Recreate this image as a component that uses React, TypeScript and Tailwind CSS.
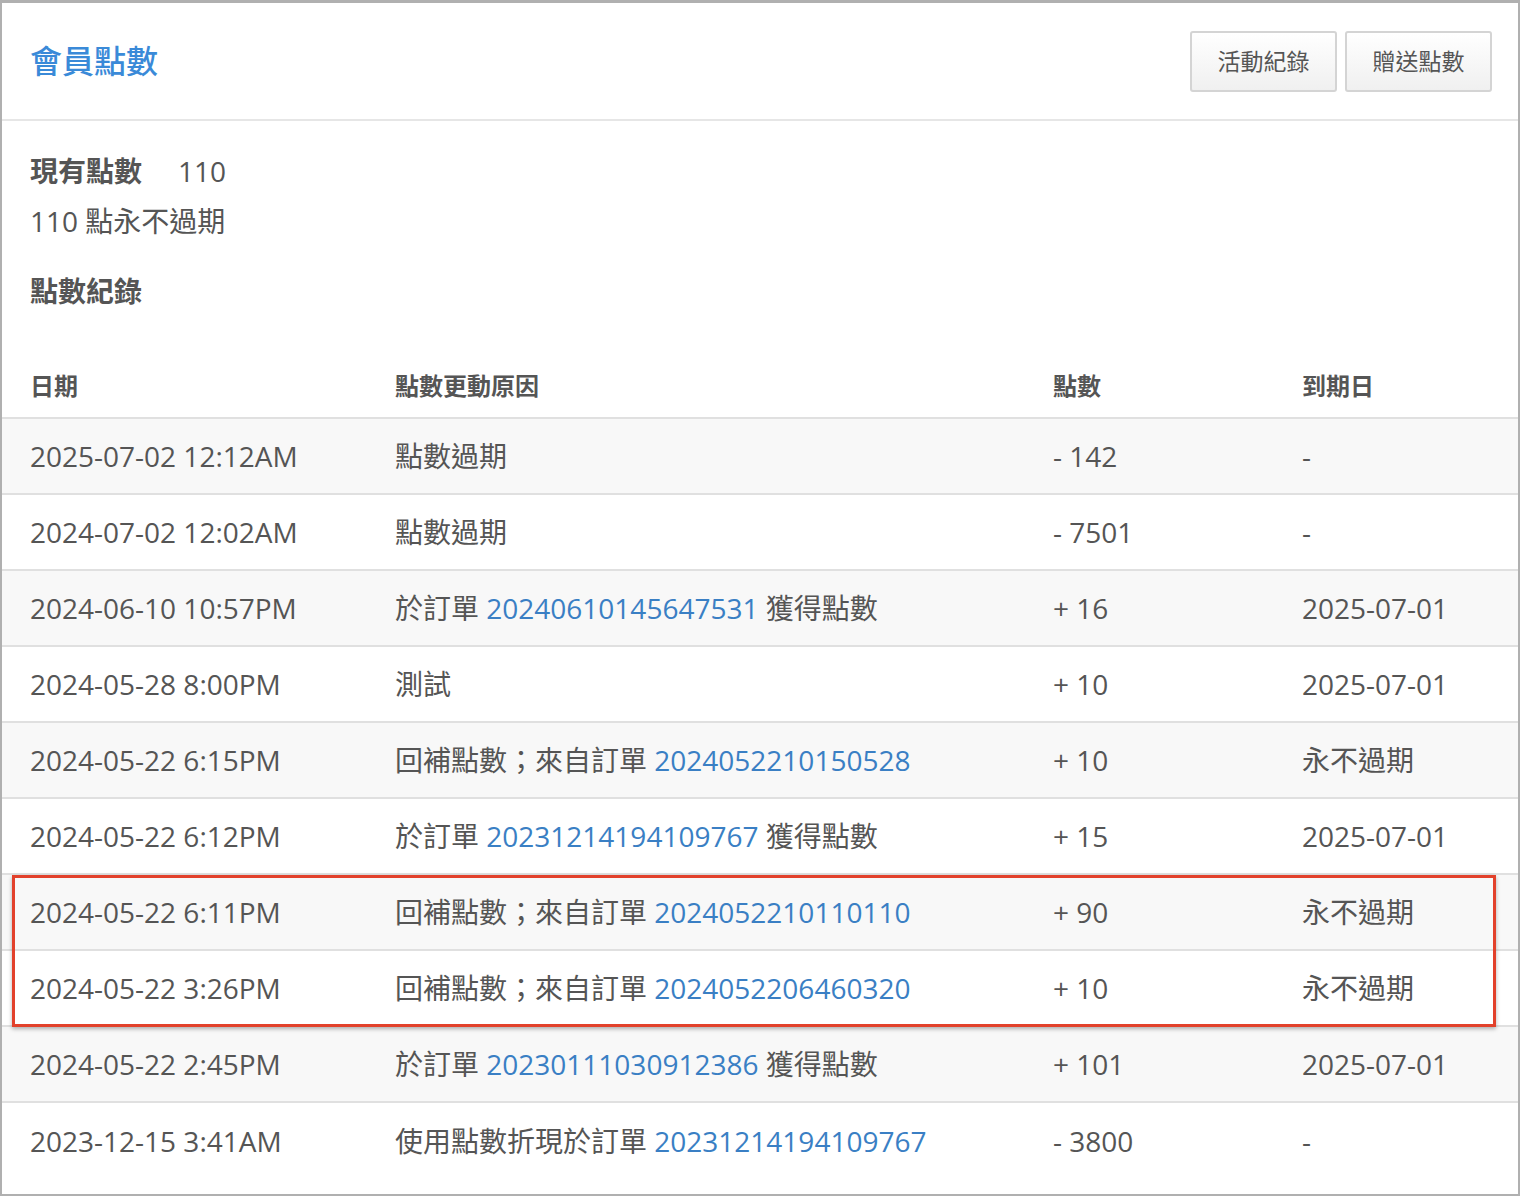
const rows: { date: string; pre: string; link?: string; post?: string; pts: string; exp: string }[] = [
  { date: "2025-07-02 12:12AM", pre: "點數過期", pts: "- 142", exp: "-" },
  { date: "2024-07-02 12:02AM", pre: "點數過期", pts: "- 7501", exp: "-" },
  { date: "2024-06-10 10:57PM", pre: "於訂單 ", link: "20240610145647531", post: " 獲得點數", pts: "+ 16", exp: "2025-07-01" },
  { date: "2024-05-28 8:00PM", pre: "測試", pts: "+ 10", exp: "2025-07-01" },
  { date: "2024-05-22 6:15PM", pre: "回補點數；來自訂單 ", link: "2024052210150528", pts: "+ 10", exp: "永不過期" },
  { date: "2024-05-22 6:12PM", pre: "於訂單 ", link: "20231214194109767", post: " 獲得點數", pts: "+ 15", exp: "2025-07-01" },
  { date: "2024-05-22 6:11PM", pre: "回補點數；來自訂單 ", link: "2024052210110110", pts: "+ 90", exp: "永不過期" },
  { date: "2024-05-22 3:26PM", pre: "回補點數；來自訂單 ", link: "2024052206460320", pts: "+ 10", exp: "永不過期" },
  { date: "2024-05-22 2:45PM", pre: "於訂單 ", link: "20230111030912386", post: " 獲得點數", pts: "+ 101", exp: "2025-07-01" },
  { date: "2023-12-15 3:41AM", pre: "使用點數折現於訂單 ", link: "20231214194109767", pts: "- 3800", exp: "-" },
];

export default function App() {
  return (
    <div
      className="relative h-[1196px] w-[1520px] border-2 border-t-[3px] border-[#b0b0b0] bg-white text-[#555]"
      style={{ fontFamily: '"Open Sans", "Noto Sans CJK TC", sans-serif' }}
    >
      {/* Header */}
      <div className="flex h-[118px] items-center justify-between border-b-2 border-[#e6e6e6] pl-7 pr-[26px]">
        <h1 className="text-[32px] font-medium text-[#3a8ad8]">會員點數</h1>
        <div className="flex gap-2">
          {["活動紀錄", "贈送點數"].map((t) => (
            <button
              key={t}
              className="h-[61px] w-[147px] rounded-[3px] border-2 border-[#d4d4d4] bg-gradient-to-b from-white to-[#f0f0f0] text-[23px] text-[#555]"
            >
              {t}
            </button>
          ))}
        </div>
      </div>

      {/* Summary */}
      <div className="px-7 pt-[30px]">
        <div className="flex items-center text-[28px] leading-[40px]">
          <span className="font-bold">現有點數</span>
          <span className="ml-9">110</span>
        </div>
        <div className="mt-[10px] text-[28px] leading-[40px]">110 點永不過期</div>
        <div className="mt-[30px] text-[28px] font-bold leading-[40px]">點數紀錄</div>
      </div>

      {/* Table */}
      <div className="mt-[44px]">
        <div className="grid h-[64px] grid-cols-[365px_658px_249px_1fr] items-center border-b-2 border-[#e0e0e0] pl-7 text-[24px] font-bold">
          <span>日期</span>
          <span>點數更動原因</span>
          <span>點數</span>
          <span>到期日</span>
        </div>
        {rows.map((r, i) => (
          <div
            key={i}
            className={`grid h-[76px] grid-cols-[365px_658px_249px_1fr] items-center pl-7 text-[28px] ${
              i % 2 === 0 ? "bg-[#f8f8f8]" : "bg-white"
            } ${i === rows.length - 1 ? "" : "border-b-2 border-[#e0e0e0]"}`}
          >
            <span>{r.date}</span>
            <span className="whitespace-nowrap">
              {r.pre}
              {r.link && <span className="text-[#3a7fc4]">{r.link}</span>}
              {r.post}
            </span>
            <span>{r.pts}</span>
            <span>{r.exp}</span>
          </div>
        ))}
      </div>

      {/* Highlight box */}
      <div className="pointer-events-none absolute left-[10px] top-[872px] h-[152px] w-[1484px] border-[3px] border-[#e2412b] shadow-[0_2px_4px_rgba(0,0,0,0.3)]" />
    </div>
  );
}
